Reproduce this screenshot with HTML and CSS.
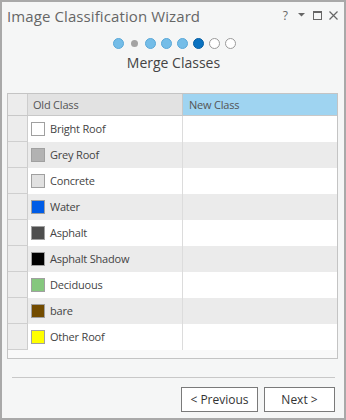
FILE: index.html
```html
<!DOCTYPE html>
<html lang="en">
<head>
    <meta charset="UTF-8">
    <title>Image Classification Wizard</title>
    <link rel="stylesheet" href="styles.css">
</head>
<body>
    <div class="window">
        <div class="titlebar">
            <span class="title">Image Classification Wizard</span>
            <div class="controls">
                <span class="help">?</span>
                <svg width="8" height="4" viewBox="0 0 8 4"><path d="M0 0h7L3.5 3.5z" fill="#666"/></svg>
                <svg width="9" height="9" viewBox="0 0 9 9"><rect x="0.5" y="0.5" width="8" height="8" fill="none" stroke="#666"/><rect x="0" y="0" width="9" height="2" fill="#666"/></svg>
                <svg width="9" height="9" viewBox="0 0 9 9"><path d="M0.5 0.5l8 8M8.5 0.5l-8 8" stroke="#666" stroke-width="1.2"/></svg>
            </div>
        </div>

        <div class="steps">
            <span class="dot done"></span>
            <span class="dot skip"></span>
            <span class="dot done"></span>
            <span class="dot done"></span>
            <span class="dot done"></span>
            <span class="dot current"></span>
            <span class="dot todo"></span>
            <span class="dot todo"></span>
        </div>
        <div class="step-title">Merge Classes</div>

        <div class="grid">
            <table>
                <thead>
                    <tr>
                        <th class="rowhead"></th>
                        <th class="old">Old Class</th>
                        <th class="new">New Class</th>
                    </tr>
                </thead>
                <tbody>
                    <tr><td class="rowhead"></td><td class="old"><span class="swatch" style="background:#ffffff"></span>Bright Roof</td><td></td></tr>
                    <tr><td class="rowhead"></td><td class="old"><span class="swatch" style="background:#b2b2b2"></span>Grey Roof</td><td></td></tr>
                    <tr><td class="rowhead"></td><td class="old"><span class="swatch" style="background:#e1e1e1"></span>Concrete</td><td></td></tr>
                    <tr><td class="rowhead"></td><td class="old"><span class="swatch" style="background:#005ce6"></span>Water</td><td></td></tr>
                    <tr><td class="rowhead"></td><td class="old"><span class="swatch" style="background:#4e4e4e"></span>Asphalt</td><td></td></tr>
                    <tr><td class="rowhead"></td><td class="old"><span class="swatch" style="background:#000000"></span>Asphalt Shadow</td><td></td></tr>
                    <tr><td class="rowhead"></td><td class="old"><span class="swatch" style="background:#85c77e"></span>Deciduous</td><td></td></tr>
                    <tr><td class="rowhead"></td><td class="old"><span class="swatch" style="background:#734c00"></span>bare</td><td></td></tr>
                    <tr><td class="rowhead"></td><td class="old"><span class="swatch" style="background:#ffff00"></span>Other Roof</td><td></td></tr>
                </tbody>
            </table>
        </div>

        <div class="footer">
            <button>&lt; Previous</button>
            <button class="next">Next &gt;</button>
        </div>
    </div>
</body>
</html>
```

FILE: styles.css
```css
body {
    margin: 0;
    padding: 0;
    font-family: 'Open Sans', 'Noto Sans', Arial, sans-serif;
    color: #444;
}
.window {
    width: 346px;
    height: 420px;
    box-sizing: border-box;
    border: 2px solid #a9a9a9;
    background-color: #f5f6f6;
    display: flex;
    flex-direction: column;
}
.titlebar {
    display: flex;
    align-items: center;
    justify-content: space-between;
    height: 28px;
    padding: 0 6px 0 5px;
}
.title {
    font-size: 15px;
    color: #666;
    letter-spacing: 0.1px;
}
.controls {
    display: flex;
    align-items: center;
    gap: 7px;
    margin-top: -2px;
}
.help {
    font-size: 12px;
    color: #666;
    margin-right: 3px;
}
.steps {
    display: flex;
    justify-content: center;
    align-items: center;
    gap: 5px;
    margin-top: 8px;
    margin-left: 2px;
    height: 11px;
}
.dot {
    width: 11px;
    height: 11px;
    border-radius: 50%;
    box-sizing: border-box;
}
.dot.done {
    background-color: #74bde8;
    border: 1px solid #5aa8d8;
}
.dot.skip {
    width: 7px;
    height: 7px;
    margin: 0 2px;
    background-color: #a3a3a3;
}
.dot.current {
    background-color: #0a72c0;
    border: 1px solid #075fa3;
}
.dot.todo {
    background-color: #fff;
    border: 1px solid #9a9a9a;
}
.step-title {
    text-align: center;
    font-size: 14px;
    color: #444;
    margin-top: 4px;
    margin-left: 1px;
}
.grid {
    margin: 21px 6px 0 5px;
    height: 266px;
    box-sizing: border-box;
    border: 1px solid #c4c4c4;
    background-color: #f9f9f9;
}
table {
    width: 100%;
    border-collapse: collapse;
    font-size: 11px;
    letter-spacing: -0.2px;
}
th {
    height: 21px;
    padding: 0 0 0 5px;
    text-align: left;
    font-weight: normal;
    color: #555;
    border-bottom: 1px solid #c8c8c8;
}
th.old {
    background-color: #e2e2e2;
    width: 149px;
    border-right: 1px solid #c8c8c8;
}
th.new {
    background-color: #9fd4f1;
    padding-left: 6px;
}
.rowhead {
    width: 19px;
    padding: 0;
    background-color: #ececec;
    border-right: 1px solid #cdcdcd;
}
th.rowhead {
    background-color: #ececec;
}
td {
    height: 26px;
    padding: 0;
    box-sizing: border-box;
}
td.rowhead {
    border-bottom: 1px solid #cfcfcf;
}
td.old {
    padding-left: 3px;
    border-right: 1px solid #dcdcdc;
    color: #444;
}
tbody tr:nth-child(odd) td:not(.rowhead) {
    background-color: #fff;
}
tbody tr:nth-child(even) td:not(.rowhead) {
    background-color: #ebebeb;
}
.swatch {
    display: inline-block;
    width: 14px;
    height: 14px;
    box-sizing: border-box;
    border: 1px solid #a0a0a0;
    vertical-align: middle;
    margin-right: 5px;
    margin-top: -2px;
}
.footer {
    margin: 18px 9px 0 10px;
    padding-top: 9px;
    border-top: 1px solid #c8c8c8;
    display: flex;
    justify-content: flex-end;
    gap: 6px;
}
button {
    height: 25px;
    width: 77px;
    padding: 0;
    font-family: 'Open Sans', 'Noto Sans', Arial, sans-serif;
    font-size: 12px;
    color: #333;
    background-color: #fff;
    border: 1px solid #7a7a7a;
}
button.next {
    width: 71px;
}
```
